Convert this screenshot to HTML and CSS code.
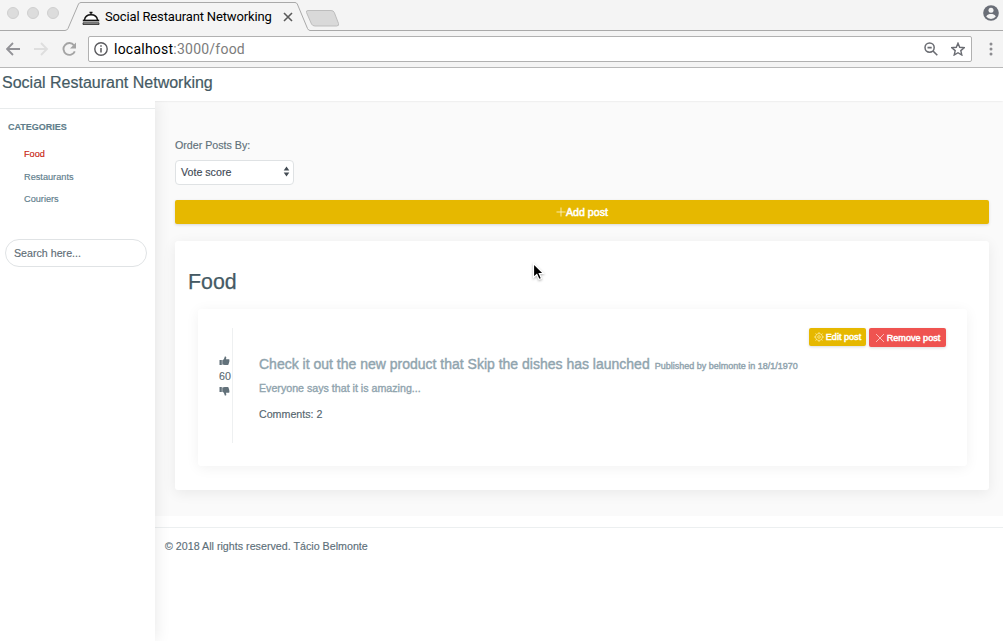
FILE: index.html
```html
<!DOCTYPE html>
<html lang="en">
<head>
<meta charset="utf-8">
<title>Social Restaurant Networking</title>
<link rel="stylesheet" href="styles.css">
</head>
<body>
<div class="tabstrip">
  <svg class="tab-outline" width="1003" height="31" viewBox="0 0 1003 31">
    <path d="M0 30.500H65Q67 30.500 68 28.500L78.500 4Q79.300 2.500 81 2.500H295Q296.500 2.500 297.300 4L307.500 28.500Q308.500 30.500 310 30.500H1003" fill="none" stroke="#a9a9a9"/>
    <path d="M308 10.500H331Q333.500 10.500 334.300 12.500L338.500 23.500Q339.300 26 336.500 26H315Q312.500 26 311.500 24L306.500 12.500Q305.900 10.500 308 10.500Z" fill="#d9d9d9" stroke="#bdbdbd"/>
  </svg>
  <div class="lights"><i></i><i></i><i></i></div>
  <div class="tab">
    <svg class="bell" width="18" height="15" viewBox="0 0 18 15">
      <path d="M2.500 9C3 5.500 5.500 3.700 9 3.700S15 5.500 15.500 9" fill="#fff" stroke="#111" stroke-width="1.500"/>
      <path d="M7.500 1.500h3M9 1.500v2" stroke="#111" stroke-width="1.300"/>
      <path d="M.800 9.500h16.400" stroke="#111" stroke-width="1.700"/>
      <path d="M1 11.800h16v1.700H1z" fill="#999" stroke="#222" stroke-width=".8"/>
    </svg>
    <span class="tab-title">Social Restaurant Networking</span>
    <svg width="10" height="10" viewBox="0 0 10 10"><path d="M1 1l8 8M9 1L1 9" stroke="#5a5a5a" stroke-width="1.600"/></svg>
  </div>
  <svg class="profile" width="16" height="16" viewBox="0 0 16 16"><circle cx="8" cy="8" r="7.800" fill="#6a6e77"/><circle cx="8" cy="5.200" r="2.500" fill="#f4f4f4"/><path d="M3.200 11.500C4 9.500 6.300 9 8 9s4 .5 4.800 2.500A6 6 0 0 1 3.200 11.500z" fill="#f4f4f4"/></svg>
</div>
<div class="toolbar">
  <svg class="nav-icon" width="15" height="14" viewBox="0 0 15 14"><path d="M14 7H1.500M7 1L1 7l6 6" fill="none" stroke="#929297" stroke-width="1.800"/></svg>
  <svg class="nav-icon" width="15" height="14" viewBox="0 0 15 14"><path d="M0 7H12.500M7 1l6 6-6 6" fill="none" stroke="#dedede" stroke-width="1.800"/></svg>
  <svg class="nav-icon" width="15" height="14" viewBox="0 0 15 14"><path d="M12.800 9.300A5.900 5.900 0 1 1 12 3.300" fill="none" stroke="#a4a4a4" stroke-width="1.900"/><path d="M14 .5v6H8z" fill="#a4a4a4"/></svg>
  <div class="omnibox">
    <svg width="14" height="14" viewBox="0 0 14 14"><circle cx="7" cy="7" r="6.200" fill="none" stroke="#5a5a5e" stroke-width="1.400"/><path d="M7 6v4.600M7 3.200v1.600" stroke="#5a5a5e" stroke-width="1.500"/></svg>
    <span class="url"><b>localhost</b>:3000/food</span>
    <svg class="zoom-icon" width="14" height="14" viewBox="0 0 14 14"><circle cx="5.600" cy="5.600" r="4.600" fill="none" stroke="#6a6c72" stroke-width="1.500"/><path d="M3.500 5.600h4.200M9 9l4.300 4.300" stroke="#6a6c72" stroke-width="1.600"/></svg>
    <svg width="14" height="14" viewBox="0 0 14 14"><path d="M7 1.200l1.700 4.100 4.500.4-3.400 2.900 1 4.400L7 10.700 3.200 13l1-4.400L.8 5.700l4.500-.4z" fill="none" stroke="#6a6c72" stroke-width="1.400"/></svg>
  </div>
  <svg class="dots" width="4" height="14" viewBox="0 0 4 14" fill="#8c8c90"><circle cx="2" cy="2" r="1.500"/><circle cx="2" cy="7" r="1.500"/><circle cx="2" cy="12" r="1.500"/></svg>
</div>
<header class="brand">Social Restaurant Networking</header>
<div class="layout">
  <aside class="sidebar">
    <h2 class="side-title">CATEGORIES</h2>
    <nav class="side-nav"><a class="active">Food</a><a>Restaurants</a><a>Couriers</a></nav>
    <div class="search">Search here...</div>
  </aside>
  <div class="page">
    <main class="content">
      <div class="order-label">Order Posts By:</div>
      <div class="select"><span>Vote score</span>
        <svg width="7" height="12" viewBox="0 0 7 12"><path d="M3.500 .5L6.300 4.500H.7zM3.500 10.500L.7 6.500h5.600z" fill="#444c54"/></svg>
      </div>
      <div class="add-button"><svg width="10" height="10" viewBox="0 0 10 10"><path d="M5 .5v9M.5 5h9" stroke="#fff6d0" stroke-width=".8"/></svg><span>Add post</span></div>
      <section class="panel">
        <h1 class="panel-title">Food</h1>
        <article class="post">
          <div class="votes">
            <svg width="11" height="10" viewBox="0 0 11 10" fill="#62717a"><path d="M.5 4h2.300v5H.5zM3.300 4.200C5 3.500 5.200 2.500 5.700.7c.2-.6 1.500-.3 1.600.6L7 3.300h2.800c.8 0 .8 1 .5 1.400.2.500.2 1-.2 1.400.1.500 0 1-.4 1.300.1.700-.2 1.400-1 1.600H5.800L3.300 8.500z"/></svg>
            <span>60</span>
            <svg width="11" height="10" viewBox="0 0 11 10" fill="#62717a"><path d="M.5 1h2.300v5H.5zM3.300 5.800C5 6.500 5.200 7.500 5.700 9.300c.2.600 1.500.3 1.600-.6L7 6.700h2.800c.8 0 .8-1 .5-1.400.2-.5.2-1-.2-1.400.1-.5 0-1-.4-1.300.1-.7-.2-1.400-1-1.600H5.800L3.300 1.500z"/></svg>
          </div>
          <div class="post-body">
            <div class="actions">
              <div class="action edit"><svg width="10" height="10" viewBox="0 0 10 10" fill="none" stroke="#fff0b0" stroke-width=".7"><circle cx="5" cy="5" r="3.500"/><circle cx="5" cy="5" r="1.300"/><path d="M5 0v1.500M5 8.500V10M0 5h1.500M8.500 5H10M1.500 1.500l1 1M7.500 7.500l1 1M8.500 1.500l-1 1M2.500 7.500l-1 1"/></svg><span>Edit post</span></div>
              <div class="action remove"><svg width="10" height="10" viewBox="0 0 10 10"><path d="M1 1l8 8M9 1L1 9" stroke="#ffd6d4" stroke-width=".8"/></svg><span>Remove post</span></div>
            </div>
            <div class="headline"><span class="post-title">Check it out the new product that Skip the dishes has launched</span><span class="byline">Published by belmonte in 18/1/1970</span></div>
            <p class="excerpt">Everyone says that it is amazing...</p>
            <p class="comments">Comments: 2</p>
          </div>
        </article>
      </section>
    </main>
    <footer class="footer">© 2018 All rights reserved. Tácio Belmonte</footer>
  </div>
</div>
<svg class="cursor" width="14" height="20" viewBox="0 0 14 20"><path d="M1.500 1.500v14l3.300-3 2.200 5 2.500-1-2.200-5h4.200z" fill="#000" stroke="#fff" stroke-width="1.200"/></svg>
</body>
</html>
```
FILE: styles.css
```css
* { box-sizing: border-box; }
body {
  margin: 0;
  height: 641px;
  overflow: hidden;
  display: flex;
  flex-direction: column;
  background: #fff;
  color: #5a6a73;
  font: 10.67px/16px "Liberation Sans", Arial, sans-serif;
  position: relative;
}
svg { display: block; flex: none; }
h1, h2, p { margin: 0; font-weight: 400; }
span { white-space: nowrap; }

.tabstrip {
  height: 31px;
  flex: none;
  display: flex;
  background: #f4f4f4;
  position: relative;
}
.tab-outline { position: absolute; left: 0; top: 0; }
.lights { display: flex; gap: 8px; padding: 7px 0 0 7px; width: 82px; }
.lights i { width: 12px; height: 12px; border-radius: 50%; background: #dcdcdc; border: 1px solid #cfcfcf; }
.tab { display: flex; align-items: center; height: 33px; position: relative; color: #000; font: 13px/16px Roboto, sans-serif; }
.bell { margin: 3px 5px 0 0; }
.tab-title { width: 178px; letter-spacing: -0.15px; }
.profile { position: relative; margin: 5px 4px 0 auto; }

.toolbar {
  height: 37px;
  flex: none;
  display: flex;
  align-items: center;
  padding: 0 10px 1px 6px;
  background: #f4f4f4;
  border-bottom: 1px solid #b8b8b8;
}
.nav-icon { margin-right: 13px; }
.nav-icon:nth-child(3) { margin-right: 11px; }
.omnibox {
  flex: 1;
  height: 26px;
  display: flex;
  align-items: center;
  padding: 0 6px 0 5px;
  border: 1px solid #b1b1b1;
  border-radius: 2px;
  background: #fff;
}
.url { flex: 1; margin-left: 6px; color: #7c7c7c; font: 14px/18px Roboto, sans-serif; letter-spacing: 0.23px; }
.url b { color: #000; font-weight: 400; }
.zoom-icon { margin-right: 13px; }
.dots { margin-left: 17px; }

.brand {
  height: 33px;
  flex: none;
  padding: 5px 2px;
  color: #455a64;
  font-size: 16px;
  line-height: 20px;
  -webkit-text-stroke: 0.2px;
  box-shadow: 0 0 2px rgba(0, 0, 0, 0.12);
  clip-path: inset(0 0 -4px 0);
}
.layout { display: flex; flex: 1; min-height: 0; -webkit-text-stroke: 0.15px; }
.sidebar { width: 155px; flex: none; padding-top: 7px; box-shadow: 1px 0 15px rgba(0, 0, 0, 0.09); clip-path: inset(0 -20px 0 0); position: relative; background: #fff; }
.side-title { padding: 11px 8px 10px; border-top: 1px solid #e8ebec; color: #607d8b; font-size: 9px; line-height: 15px; font-weight: 700; }
.side-nav { display: grid; grid-template-rows: repeat(3, 22.5px); padding-left: 24px; color: #607d8b; font-size: 9.2px; line-height: 19px; }
.active { color: #c81d11; }
.search { margin: 26px 8px 0 5px; height: 28px; padding: 5px 8px; border: 1px solid #e0e3e5; border-radius: 14px; color: #606d76; }

.page { flex: 1; display: flex; flex-direction: column; }
.content { height: 415px; padding: 36px 14px 0 20px; background: #fafafa; }
.order-label { height: 23px; color: #607079; }
.select { display: flex; align-items: center; justify-content: space-between; width: 119px; height: 25px; padding: 0 3px 1px 5px; border: 1px solid #dfe2e4; border-radius: 4px; background: #fff; color: #414a55; }
.add-button {
  display: flex;
  align-items: center;
  justify-content: center;
  height: 24px;
  margin: 15px 0 17px;
  border-radius: 2px;
  background: #e6b800;
  box-shadow: 0 1px 3px rgba(0, 0, 0, 0.14);
  color: #fff;
  -webkit-text-stroke: 0.5px #fff;
}
.panel { height: 249px; padding: 27px 22px 24px 23px; border-radius: 3px; background: #fff; box-shadow: 0 3px 14px rgba(0, 0, 0, 0.07); }
.panel-title { margin: 0 0 13px -10px; color: #455a64; font-size: 21.33px; line-height: 28px; -webkit-text-stroke: 0.25px; }
.post { display: flex; height: 157px; padding: 19px 21px 23px; border-radius: 3px; background: #fff; box-shadow: 0 2px 14px rgba(0, 0, 0, 0.06); }
.votes { width: 14px; height: 115px; padding-top: 28px; border-right: 1px solid #eef0f1; line-height: 20px; }
.post-body { flex: 1; padding-left: 26px; color: #90a4ae; }
.actions { display: flex; justify-content: flex-end; align-items: flex-start; gap: 3px; height: 20px; }
.action { display: flex; align-items: center; justify-content: center; gap: 2px; height: 18px; border-radius: 2px; color: #fff; font-size: 9.1px; line-height: 14px; -webkit-text-stroke: 0.5px #fff; box-shadow: 0 1px 3px rgba(0, 0, 0, 0.14); }
.edit { width: 57px; background: #e6b800; }
.remove { width: 77px; height: 19px; background: #ef5350; }
.headline { display: flex; align-items: baseline; gap: 5px; height: 32px; padding-top: 6px; line-height: 20px; -webkit-text-stroke: 0.4px; }
.post-title { font-size: 14px; }
.byline { font-size: 9px; }
.excerpt { -webkit-text-stroke: 0.35px; }
.comments { margin-top: 10px; color: #54656e; }
.footer { margin-top: 11px; padding: 10px; border-top: 1px solid #eceff0; color: #5d6f79; letter-spacing: 0.02px; }
.cursor { position: absolute; left: 532px; top: 262px; filter: drop-shadow(0 1px 1px rgba(0, 0, 0, 0.3)); }
```
